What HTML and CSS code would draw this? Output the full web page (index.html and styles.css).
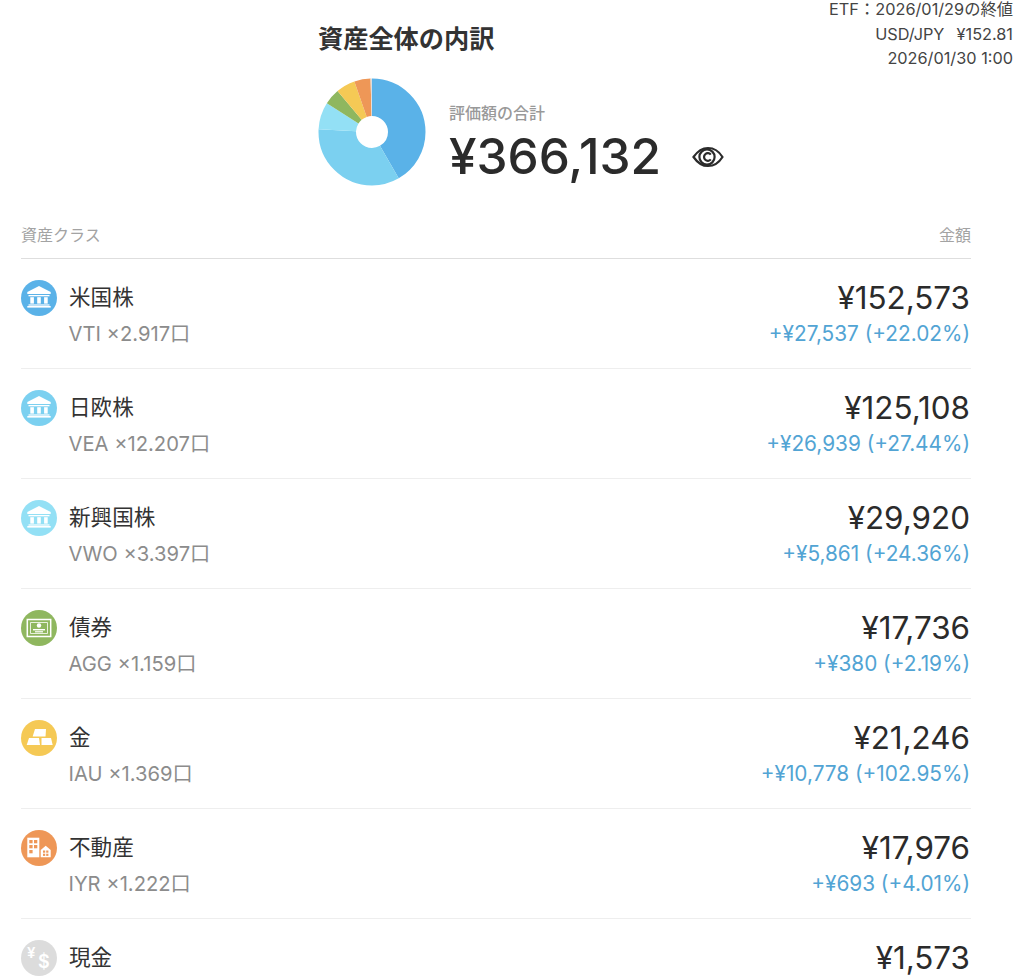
FILE: index.html
```html
<!DOCTYPE html>
<html lang="ja">
<head>
<meta charset="utf-8">
<title>資産全体の内訳</title>
<link rel="stylesheet" href="styles.css">
</head>
<body>
<svg class="defs" width="0" height="0" aria-hidden="true">
  <symbol id="bank" viewBox="0 0 36 36">
    <path d="M18 6 L29.7 12 V14 H6.3 V12 Z" fill="#fff"/>
    <rect x="7.5" y="15" width="21" height="1.3" fill="#fff"/>
    <rect x="9.3" y="17.2" width="3.6" height="6.4" fill="#fff"/>
    <rect x="16.2" y="17.2" width="3.6" height="6.4" fill="#fff"/>
    <rect x="23.1" y="17.2" width="3.6" height="6.4" fill="#fff"/>
    <rect x="7.5" y="24.4" width="21" height="1.2" fill="#fff"/>
    <rect x="6.3" y="26" width="23.4" height="1.6" fill="#fff"/>
  </symbol>
</svg>
<main class="page">
  <header class="top">
    <div class="overview">
      <h1 class="title">資産全体の内訳</h1>
      <div class="summary">
        <svg class="pie" viewBox="0 0 108 108" width="108" height="108" aria-hidden="true">
          <g fill="none" stroke-width="37.5" transform="rotate(-90 54 54)">
            <circle cx="54" cy="54" r="34.75" pathLength="100" stroke="#5ab2e8" stroke-dasharray="41.67 100" stroke-dashoffset="0"/>
            <circle cx="54" cy="54" r="34.75" pathLength="100" stroke="#7bd0f0" stroke-dasharray="34.17 100" stroke-dashoffset="-41.67"/>
            <circle cx="54" cy="54" r="34.75" pathLength="100" stroke="#93e0f5" stroke-dasharray="8.17 100" stroke-dashoffset="-75.84"/>
            <circle cx="54" cy="54" r="34.75" pathLength="100" stroke="#8fb75f" stroke-dasharray="4.84 100" stroke-dashoffset="-84.01"/>
            <circle cx="54" cy="54" r="34.75" pathLength="100" stroke="#f5c955" stroke-dasharray="5.8 100" stroke-dashoffset="-88.85"/>
            <circle cx="54" cy="54" r="34.75" pathLength="100" stroke="#ee9757" stroke-dasharray="4.91 100" stroke-dashoffset="-94.65"/>
            <circle cx="54" cy="54" r="34.75" pathLength="100" stroke="#dcdcdc" stroke-dasharray="0.44 100" stroke-dashoffset="-99.56"/>
          </g>
        </svg>
        <div class="total">
          <div class="total-label">評価額の合計</div>
          <div class="total-line">
            <span class="total-value">¥366,132</span>
            <svg class="eye" viewBox="0 0 32 24" width="32" height="24" aria-hidden="true">
              <g fill="none" stroke="#2b2b2b" stroke-width="2.2">
                <path d="M1.5 12 C6 5.5 11 3 16 3 C21 3 26.5 5.5 30.5 12 C26.5 18.5 21 21 16 21 C11 21 6 18.5 1.5 12 Z"/>
                <circle cx="15" cy="12" r="7.6"/>
                <path d="M18.8 9.6 A3.8 3.8 0 1 0 18.8 14.4"/>
              </g>
            </svg>
          </div>
        </div>
      </div>
    </div>
    <div class="rates">
      <div>ETF：2026/01/29の終値</div>
      <div class="rate-usd">USD/JPY&nbsp;&nbsp;¥152.81</div>
      <div>2026/01/30 1:00</div>
    </div>
  </header>

  <section class="table">
    <div class="table-head"><span>資産クラス</span><span>金額</span></div>

    <article class="row">
      <div class="icon c-us"><svg width="36" height="36"><use href="#bank"/></svg></div>
      <div class="names"><div class="name">米国株</div><div class="sub">VTI ×2.917口</div></div>
      <div class="amounts"><div class="amount">¥152,573</div><div class="gain">+¥27,537 (+22.02%)</div></div>
    </article>

    <article class="row">
      <div class="icon c-jp"><svg width="36" height="36"><use href="#bank"/></svg></div>
      <div class="names"><div class="name">日欧株</div><div class="sub">VEA ×12.207口</div></div>
      <div class="amounts"><div class="amount">¥125,108</div><div class="gain">+¥26,939 (+27.44%)</div></div>
    </article>

    <article class="row">
      <div class="icon c-em"><svg width="36" height="36"><use href="#bank"/></svg></div>
      <div class="names"><div class="name">新興国株</div><div class="sub">VWO ×3.397口</div></div>
      <div class="amounts"><div class="amount">¥29,920</div><div class="gain">+¥5,861 (+24.36%)</div></div>
    </article>

    <article class="row">
      <div class="icon c-bond">
        <svg width="36" height="36" viewBox="0 0 36 36">
          <rect x="6.3" y="9.5" width="23.4" height="17" fill="none" stroke="#fff" stroke-width="1.5"/>
          <path d="M9.5 12.5 H26.5 V23.5 H9.5 Z" fill="none" stroke="#fff" stroke-width="0.8"/>
          <circle cx="18" cy="15.5" r="2.2" fill="#fff"/>
          <rect x="12" y="19" width="12" height="1.4" fill="#fff"/>
          <rect x="14" y="21.2" width="8" height="1.2" fill="#fff"/>
        </svg>
      </div>
      <div class="names"><div class="name">債券</div><div class="sub">AGG ×1.159口</div></div>
      <div class="amounts"><div class="amount">¥17,736</div><div class="gain">+¥380 (+2.19%)</div></div>
    </article>

    <article class="row">
      <div class="icon c-gold">
        <svg width="36" height="36" viewBox="0 0 36 36" fill="#fff">
          <path d="M14 9 H25 L24.5 16.6 H11.7 Z"/>
          <path d="M8 18 H18 L19 25 H5.7 Z"/>
          <path d="M20.5 18 H30 L31.7 25 H20.5 Z"/>
        </svg>
      </div>
      <div class="names"><div class="name">金</div><div class="sub">IAU ×1.369口</div></div>
      <div class="amounts"><div class="amount">¥21,246</div><div class="gain">+¥10,778 (+102.95%)</div></div>
    </article>

    <article class="row">
      <div class="icon c-reit">
        <svg width="36" height="36" viewBox="0 0 36 36">
          <rect x="6.3" y="7.7" width="12" height="19.6" fill="#fff"/>
          <g fill="#ee9757">
            <rect x="8.3" y="10" width="3.3" height="3.3"/><rect x="13" y="10" width="3.3" height="3.3"/>
            <rect x="8.3" y="15" width="3.3" height="3.3"/><rect x="13" y="15" width="3.3" height="3.3"/>
            <rect x="8.3" y="20" width="3.3" height="3.3"/>
          </g>
          <path d="M24.7 15.7 L29.7 20 V27.3 H19.7 V20 Z" fill="#fff"/>
          <g fill="#ee9757"><rect x="22" y="20.5" width="2.2" height="2.2"/><rect x="25.2" y="20.5" width="2.2" height="2.2"/><rect x="22" y="23.7" width="2.2" height="2.2"/><rect x="25.2" y="23.7" width="2.2" height="2.2"/></g>
        </svg>
      </div>
      <div class="names"><div class="name">不動産</div><div class="sub">IYR ×1.222口</div></div>
      <div class="amounts"><div class="amount">¥17,976</div><div class="gain">+¥693 (+4.01%)</div></div>
    </article>

    <article class="row">
      <div class="icon c-cash"><span class="yen">¥</span><span class="usd">$</span></div>
      <div class="names"><div class="name">現金</div></div>
      <div class="amounts"><div class="amount">¥1,573</div></div>
    </article>
  </section>
</main>
</body>
</html>
```

FILE: styles.css
```css
* { box-sizing: border-box; }
html, body { margin: 0; padding: 0; height: 979px; overflow: hidden; background: #fff; }
body { font-family: Inter, "Noto Sans CJK JP", sans-serif; color: #2b2b2b; }
.defs { display: block; height: 0; }
.page { width: 1024px; }

.top { display: flex; justify-content: space-between; height: 225px; padding-left: 318px; padding-right: 11px; }
.overview { padding-top: 23px; }
.title { margin: 0; font-size: 25.2px; line-height: 32px; font-weight: 700; color: #333; }
.summary { display: flex; align-items: flex-start; margin-top: 23px; }
.pie { display: block; flex: none; }
.total { margin-left: 23px; padding-top: 24px; }
.total-label { font-size: 16px; line-height: 22px; color: #999; font-weight: 500; }
.total-line { display: flex; align-items: center; margin-top: 5px; }
.total-value { font-size: 49.5px; line-height: 54px; font-weight: 500; color: #2b2b2b; }
.eye { margin-left: 31px; margin-top: 2px; display: block; }

.rates { font-size: 16.3px; line-height: 24.5px; text-align: right; color: #444; margin-top: -3px; white-space: nowrap; }
.rate-usd { word-spacing: 1.5px; }

.table { margin: 0 53px 0 21px; }
.table-head { display: flex; justify-content: space-between; height: 34px; font-size: 16px; line-height: 20px; color: #a3a3a3; border-bottom: 1.5px solid #dedede; }

.row { display: flex; height: 110px; padding-top: 21px; border-bottom: 1px solid #eee; }
.icon { flex: none; width: 36px; height: 36px; border-radius: 50%; position: relative; overflow: hidden; }
.icon svg { display: block; }
.c-us { background: #5ab2e8; }
.c-jp { background: #7bd0f0; }
.c-em { background: #93e0f5; }
.c-bond { background: #8fb75f; }
.c-gold { background: #f5c955; }
.c-reit { background: #ee9757; }
.c-cash { background: #dcdcdc; }
.yen, .usd { position: absolute; color: #fff; font-weight: 600; line-height: 1; }
.yen { left: 6px; top: 5px; font-size: 15px; }
.usd { left: 17px; top: 13px; font-size: 18px; }

.names { margin-left: 12px; flex: 1; }
.name { font-size: 21.6px; line-height: 34px; color: #333; }
.sub { font-size: 20.2px; line-height: 36px; color: #8c8c8c; margin-top: 2px; margin-left: -0.5px; }
.amounts { text-align: right; padding-right: 1px; }
.amount { font-size: 31.4px; line-height: 36px; color: #2b2b2b; }
.gain { font-size: 20.8px; line-height: 36px; color: #52a4d4; }
```
